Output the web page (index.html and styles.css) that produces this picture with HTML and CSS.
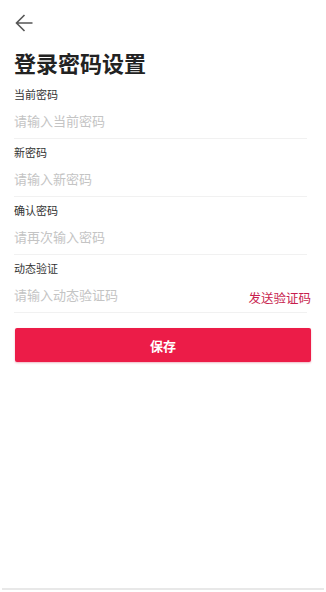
FILE: index.html
```html
<html>
<head>
    <meta charset="utf-8">
    <link rel="stylesheet" href="styles.css">
</head>
<body>
    <div class="page">
        <div class="top-bar">
            <button class="back">
                <svg width="18" height="18" viewBox="0 0 18 18">
                    <path d="M17.5 9H1.5M9.5 1L1.5 9l8 8" fill="none" stroke="#555" stroke-width="1.6"/>
                </svg>
            </button>
        </div>
        <h1 class="title">登录密码设置</h1>
        <form class="form">
            <div class="field">
                <label>当前密码</label>
                <div class="input-row">
                    <input type="password" placeholder="请输入当前密码">
                </div>
            </div>
            <div class="field">
                <label>新密码</label>
                <div class="input-row">
                    <input type="password" placeholder="请输入新密码">
                </div>
            </div>
            <div class="field">
                <label>确认密码</label>
                <div class="input-row">
                    <input type="password" placeholder="请再次输入密码">
                </div>
            </div>
            <div class="field">
                <label>动态验证</label>
                <div class="input-row">
                    <input type="text" placeholder="请输入动态验证码">
                    <span class="send-code">发送验证码</span>
                </div>
            </div>
            <button type="button" class="save">保存</button>
        </form>
        <div class="bottom-line"></div>
    </div>
</body>
</html>
```

FILE: styles.css
```css
* {
    margin: 0;
    padding: 0;
    box-sizing: border-box;
}
body {
    background-color: #fff;
    font-family: "Noto Sans CJK SC", "Noto Sans", sans-serif;
    color: #333;
}
.page {
    min-height: 592px;
    display: flex;
    flex-direction: column;
    padding: 0 15px 0 14px;
}
.top-bar {
    height: 44px;
    display: flex;
    align-items: center;
}
.back {
    border: none;
    background: none;
    display: flex;
    margin-left: 1px;
    margin-top: 1px;
}
.title {
    font-size: 22px;
    line-height: 30px;
    font-weight: 700;
    color: #222;
    margin-top: 3px;
}
.form {
    margin-top: 9px;
    display: flex;
    flex-direction: column;
    gap: 5px;
}
.field label {
    display: block;
    font-size: 11px;
    line-height: 16px;
    color: #333;
}
.input-row {
    height: 37px;
    display: flex;
    align-items: center;
    border-bottom: 1px solid #f1f1f1;
    margin-right: 4px;
}
.input-row input {
    flex: 1;
    border: none;
    outline: none;
    font-family: inherit;
    font-size: 13px;
    color: #333;
    background: none;
    min-width: 0;
}
.input-row input::placeholder {
    color: #c4c4c4;
}
.send-code {
    font-size: 12.5px;
    color: #c81e4e;
    margin-top: 6px;
    margin-right: -4px;
}
.save {
    margin-top: 10px;
    margin-left: 1px;
    height: 34px;
    border: none;
    border-radius: 2px;
    background-color: #ec1c48;
    color: #fff;
    font-family: inherit;
    font-size: 13px;
    font-weight: 700;
    box-shadow: 0 1px 2px rgba(200, 20, 60, 0.3);
}
.bottom-line {
    margin: auto -13px 2px -12px;
    height: 2px;
    background-color: #e8e8e8;
}
```
